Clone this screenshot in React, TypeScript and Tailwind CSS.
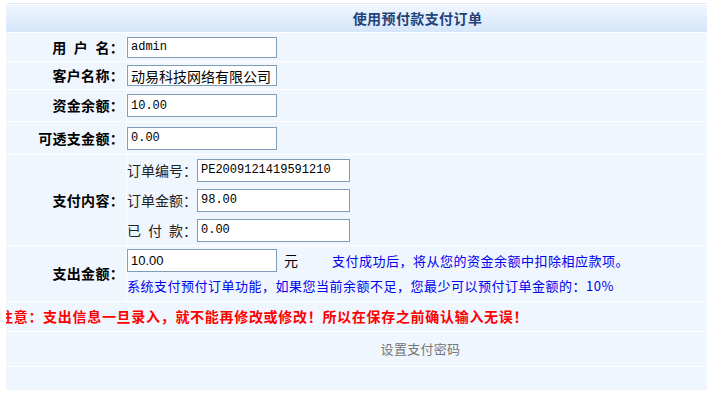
import React from "react";

const cjk = "font-['Noto_Sans_CJK_SC','Noto_Sans',sans-serif]";
const mono = "font-['Liberation_Mono','Noto_Sans_CJK_SC',monospace]";

const Field = ({value, w = "w-[150px]", h = "h-[22px]", font = mono}: { value: string, w?: string, h?: string, font?: string }) => (
    <div className={`${w} ${h} border border-[#7f9db9] bg-white flex items-center pl-[3px] text-[12px] text-black ${font} leading-none`}>
        {value}
    </div>
)

const Label = ({children}: { children: React.ReactNode }) => (
    <div className="bg-[#eff6fe] flex items-center justify-end pr-[2px] text-[14px] font-bold text-black whitespace-pre tracking-[0.3px]">
        {children}
    </div>
)

const App = () => {
    return (
        <div className={`w-[722px] h-[396px] bg-white pt-[3px] pl-[6px] ${cjk}`}>
            <div className="w-[701px]">
                <div className="h-px bg-[#dce9f8]"></div>
                <div className="h-px bg-white"></div>
                {/* header */}
                <div
                    className="h-[27px] bg-gradient-to-b from-[#f0f6fe] to-[#d5e6fb] flex items-center justify-center pl-[122px] text-[14px] font-bold text-[#1d4379] tracking-[0.4px]">
                    使用预付款支付订单
                </div>
                <div className="grid grid-cols-[120px_580px] gap-px bg-white pt-px">
                    <Label>{"用\u2002户\u2002名："}</Label>
                    <div className="bg-[#eff6fe] h-[28px] flex items-center">
                        <Field value="admin" h="h-[21px]"/>
                    </div>

                    <Label>客户名称：</Label>
                    <div className="bg-[#eff6fe] h-[27px] flex items-center">
                        <Field value="动易科技网络有限公司" h="h-[21px]" font={`${cjk} text-[14px]`}/>
                    </div>

                    <Label>资金余额：</Label>
                    <div className="bg-[#eff6fe] h-[31px] flex items-center">
                        <Field value="10.00" h="h-[23px]"/>
                    </div>

                    <Label>可透支金额：</Label>
                    <div className="bg-[#eff6fe] h-[32px] flex items-center">
                        <Field value="0.00" h="h-[23px]"/>
                    </div>

                    <Label>支付内容：</Label>
                    <div className="bg-[#eff6fe] h-[90px] flex flex-col justify-center gap-[7px] text-[14px] text-[#222]">
                        <div className="flex items-center">
                            <span className="w-[70px] whitespace-pre">订单编号：</span>
                            <Field value="PE2009121419591210" w="w-[153px]" h="h-[23px]"/>
                        </div>
                        <div className="flex items-center">
                            <span className="w-[70px] whitespace-pre">订单金额：</span>
                            <Field value="98.00" w="w-[153px]" h="h-[23px]"/>
                        </div>
                        <div className="flex items-center">
                            <span className="w-[70px] whitespace-pre">{"已\u2002付\u2002款："}</span>
                            <Field value="0.00" w="w-[153px]" h="h-[23px]"/>
                        </div>
                    </div>

                    <Label>支出金额：</Label>
                    <div className="bg-[#eff6fe] h-[55px] flex flex-col pt-[3px] gap-[5px]">
                        <div className="flex items-center">
                            <Field value="10.00" h="h-[23px]" font="font-['Liberation_Sans',sans-serif] text-[13px]"/>
                            <span className="ml-[7px] text-[14px] text-black">元</span>
                            <span className="ml-[34px] text-[13px] tracking-[0.5px] text-[#0000ee]">支付成功后，将从您的资金余额中扣除相应款项。</span>
                        </div>
                        <div className="text-[13px] tracking-[0.5px] text-[#0000ee] leading-[18px]">
                            系统支付预付订单功能，如果您当前余额不足，您最少可以预付订单金额的：10%
                        </div>
                    </div>

                    <div className="col-span-2 bg-[#eff6fe] h-[29px] flex items-center overflow-hidden">
                        <span className="ml-[-7px] text-[14px] font-bold tracking-[0.7px] text-[#ff0000] whitespace-nowrap">
                            注意：支出信息一旦录入，就不能再修改或修改！所以在保存之前确认输入无误！
                        </span>
                    </div>

                    <div className="col-span-2 bg-[#eff6fe] h-[34px] flex items-center justify-center pl-[128px] text-[13px] tracking-[0.3px] text-[#777]">
                        设置支付密码
                    </div>

                    <div className="col-span-2 bg-[#eff6fe] h-[23px]"></div>
                </div>
            </div>
        </div>
    )
}

export default App;
